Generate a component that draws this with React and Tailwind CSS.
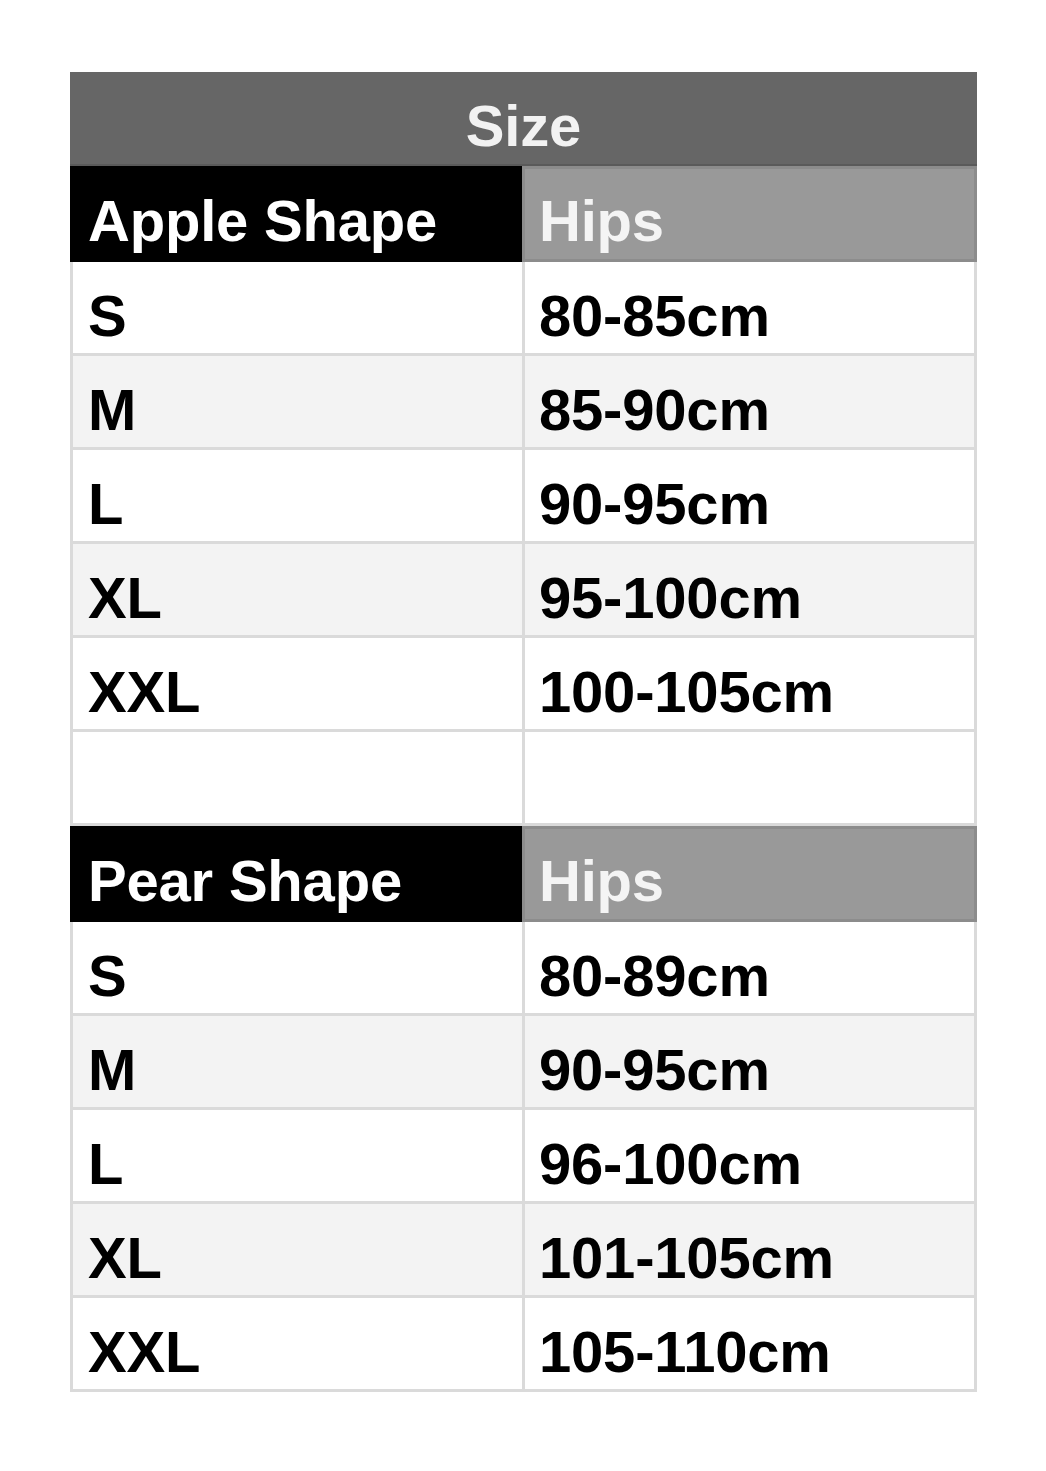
const apple = [
  ["S", "80-85cm"],
  ["M", "85-90cm"],
  ["L", "90-95cm"],
  ["XL", "95-100cm"],
  ["XXL", "100-105cm"],
];

const pear = [
  ["S", "80-89cm"],
  ["M", "90-95cm"],
  ["L", "96-100cm"],
  ["XL", "101-105cm"],
  ["XXL", "105-110cm"],
];

function HeadRow({ title }) {
  return (
    <div className="flex h-[96px]">
      <div className="w-[452px] shrink-0 bg-black text-white flex items-center pl-[18px] pt-[14px]">
        {title}
      </div>
      <div className="flex-1 bg-[#999999] text-[#f4f4f4] flex items-center pl-[14px] pt-[14px] border-[3px] border-[#8c8c8c]">
        Hips
      </div>
    </div>
  );
}

function DataRow({ size, hips, shaded }) {
  const bg = shaded ? "bg-[#f3f3f3]" : "bg-white";
  return (
    <div className={`flex h-[94px] border-b-[3px] border-[#dadada] ${bg}`}>
      <div className="w-[452px] shrink-0 flex items-center pl-[15px] pt-[16px] border-r-[3px] border-[#dadada] text-black">
        {size}
      </div>
      <div className="flex-1 flex items-center pl-[14px] pt-[16px] text-black">{hips}</div>
    </div>
  );
}

export default function App() {
  return (
    <div className="w-[1046px] h-[1471px] bg-white pt-[72px] pl-[70px]">
      <div
        className="w-[907px] font-bold text-[58px] leading-none tracking-[-0.2px]"
        style={{ fontFamily: '"Liberation Sans", Arial, sans-serif' }}
      >
        <div className="h-[94px] bg-[#666666] text-[#f2f2f2] flex items-center justify-center pt-[16px] border-b-[2px] border-[#5a5a5a]">
          Size
        </div>
        <HeadRow title="Apple Shape" />
        <div className="border-x-[3px] border-[#dadada]">
          {apple.map(([s, h], i) => (
            <DataRow key={s} size={s} hips={h} shaded={i % 2 === 1} />
          ))}
          <DataRow size="" hips="" shaded={false} />
        </div>
        <HeadRow title="Pear Shape" />
        <div className="border-x-[3px] border-[#dadada]">
          {pear.map(([s, h], i) => (
            <DataRow key={s} size={s} hips={h} shaded={i % 2 === 1} />
          ))}
        </div>
      </div>
    </div>
  );
}
